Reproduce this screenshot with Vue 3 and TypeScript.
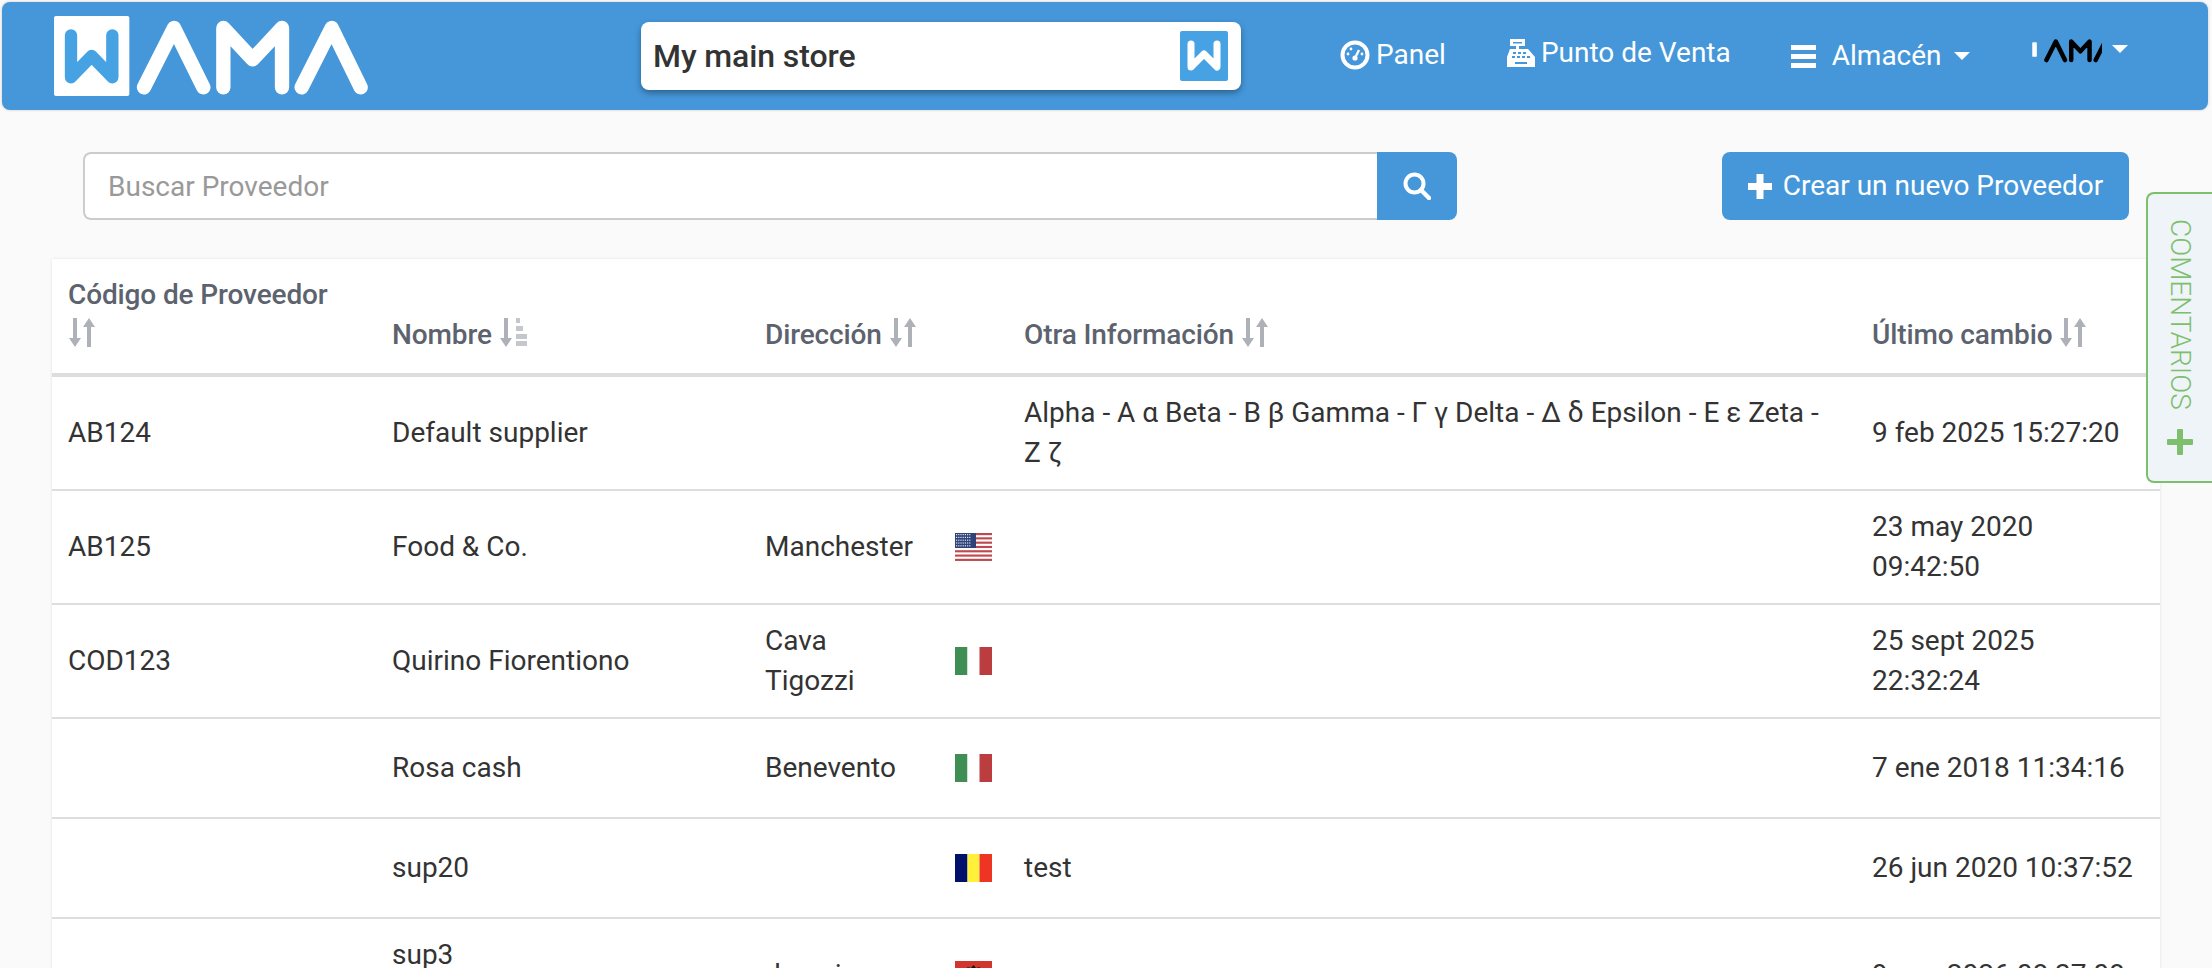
<script setup lang="ts">
interface Supplier {
  code: string
  name: string
  address: string
  flag: string
  info: string
  changed: string
}

const suppliers: Supplier[] = [
  {
    code: 'AB124',
    name: 'Default supplier',
    address: '',
    flag: '',
    info: 'Alpha - Α α Beta - Β β Gamma - Γ γ Delta - Δ δ Epsilon - Ε ε Zeta - Ζ ζ',
    changed: '9 feb 2025 15:27:20'
  },
  { code: 'AB125', name: 'Food & Co.', address: 'Manchester', flag: 'us', info: '', changed: '23 may 2020 09:42:50' },
  { code: 'COD123', name: 'Quirino Fiorentiono', address: 'Cava Tigozzi', flag: 'it', info: '', changed: '25 sept 2025 22:32:24' },
  { code: '', name: 'Rosa cash', address: 'Benevento', flag: 'it', info: '', changed: '7 ene 2018 11:34:16' },
  { code: '', name: 'sup20', address: '', flag: 'ro', info: 'test', changed: '26 jun 2020 10:37:52' },
  { code: '', name: 'sup3 Supermercadointernacional', address: 'duresi', flag: 'al', info: '', changed: '9 ene 2026 08:37:08' }
]

const headers = [
  { label: 'Código de Proveedor', cls: 'stacked', span: 1, active: false },
  { label: 'Nombre', cls: '', span: 1, active: true },
  { label: 'Dirección', cls: '', span: 2, active: false },
  { label: 'Otra Información', cls: '', span: 1, active: false },
  { label: 'Último cambio', cls: '', span: 1, active: false }
]

// shared outlines of the logo letters
const letters = 'M312 262L402 84L490 262M550 262V84L638 178L726 84V262M785 262L875 84L962 262'
const usStripes = [0, 2, 4, 6, 8, 10, 12]
const usStars = Array.from({ length: 35 }, (_, i) => ({ x: 1 + (i % 7) * 2.2, y: 1 + Math.floor(i / 7) * 2.8 }))
</script>

<template>
  <div class="page">
    <nav class="topbar">
      <svg class="logo" viewBox="42 48 942 240" aria-label="WAMA">
        <rect x="42" y="48" width="226" height="240" rx="6" fill="#fff" />
        <path d="M93 106V232L155 168L217 232V106" class="w-stroke" stroke="#46a2e3" />
        <path :d="letters" class="letters" stroke="#fff" />
      </svg>

      <div class="store">
        <span class="store-name">My main store</span>
        <svg class="store-logo" viewBox="0 0 48 50">
          <rect width="48" height="50" rx="2" fill="#46a2e3" />
          <path d="M11 13V36L24 23L37 36V13" class="w-stroke thin" stroke="#fff" />
        </svg>
      </div>

      <a class="nav-item panel">
        <svg class="nav-icon" width="30" height="30" viewBox="0 0 30 30">
          <circle cx="15" cy="15" r="12.5" fill="none" stroke="#fff" stroke-width="4" />
          <path d="M15 18L19 10" stroke="#fff" stroke-width="2.4" />
          <circle cx="15" cy="18" r="2.6" fill="#fff" />
          <circle cx="8" cy="14" r="1.4" fill="#fff" />
          <circle cx="11" cy="9" r="1.4" fill="#fff" />
          <circle cx="22" cy="14" r="1.4" fill="#fff" />
        </svg>
        Panel
      </a>
      <a class="nav-item punto">
        <svg class="nav-icon" width="28" height="28" viewBox="0 0 28 28">
          <path d="M3 0H18V7H12V10H21L28 18V28H0V18L3 10H9V7H3Z" fill="#fff" />
          <path d="M6 3H15V4.5H6Z" fill="#4597da" />
          <path d="M6 13H9V15H6ZM11 13H14V15H11ZM16 13H19V15H16ZM5 17H8V19H5ZM10 17H13V19H10ZM15 17H18V19H15ZM20 17H23V19H20ZM8 23H20V25H8Z" fill="#4597da" />
        </svg>
        Punto de Venta
      </a>
      <a class="nav-item almacen">
        <svg class="nav-icon bars" width="25" height="23" viewBox="0 0 25 23">
          <path d="M0 0H25V5H0ZM0 9H25V14H0ZM0 18H25V23H0Z" fill="#fff" />
        </svg>
        Almacén
        <span class="caret"></span>
      </a>
      <a class="nav-item user">
        <svg class="user-logo" width="70" height="25" viewBox="176 50 667 240">
          <rect x="176" y="90" width="44" height="140" rx="8" fill="#fff" />
          <path :d="letters" class="letters" stroke="#000" />
        </svg>
        <span class="caret"></span>
      </a>
    </nav>

    <div class="toolbar">
      <div class="search">
        <input class="search-input" type="text" placeholder="Buscar Proveedor" />
        <button type="button" class="search-btn" aria-label="Buscar">
          <svg width="28" height="28" viewBox="0 0 28 28">
            <circle cx="11.5" cy="11.5" r="9" fill="none" stroke="#fff" stroke-width="4" />
            <path d="M18 18L26 26" stroke="#fff" stroke-width="4.5" stroke-linecap="round" />
          </svg>
        </button>
      </div>
      <button type="button" class="new-btn">
        <svg width="24" height="25" viewBox="0 0 24 25">
          <path d="M8.5 0H15.5V9H24V16H15.5V25H8.5V16H0V9H8.5Z" fill="#fff" />
        </svg>
        Crear un nuevo Proveedor
      </button>
    </div>

    <table class="suppliers">
      <colgroup>
        <col class="c-code" />
        <col class="c-name" />
        <col class="c-addr" />
        <col class="c-flag" />
        <col class="c-info" />
        <col class="c-date" />
      </colgroup>
      <thead>
        <tr>
          <th v-for="h in headers" :key="h.label" :colspan="h.span" :class="h.cls">
            {{ h.label }}
            <svg class="sort" width="28" height="29" viewBox="0 0 28 29">
              <path d="M5 0H9V20H13L7 29L1 20H5Z" fill="#aeb2b8" />
              <path v-if="!h.active" d="M19 29H23V9H27L21 0L15 9H19Z" fill="#aeb2b8" />
              <path v-else d="M17 0H21V5H17ZM17 8H24V13H17ZM17 16H28V21H17ZM17 23H28V28H17Z" fill="#c4c7cc" />
            </svg>
          </th>
        </tr>
      </thead>
      <tbody>
        <tr v-for="s in suppliers" :key="s.name">
          <td>{{ s.code }}</td>
          <td>{{ s.name }}</td>
          <td><span class="address">{{ s.address }}</span></td>
          <td class="flag-cell">
            <svg v-if="s.flag === 'us'" class="flag" viewBox="0 0 37 28" preserveAspectRatio="none">
              <rect width="37" height="28" fill="#fff" />
              <rect v-for="n in usStripes" :key="n" x="0" :y="n * 2.15" width="37" height="2.15" fill="#bd4a4f" />
              <rect width="21" height="15" fill="#2f4379" />
              <rect v-for="(st, i) in usStars" :key="i" :x="st.x" :y="st.y" width="1.2" height="1.2" fill="#dfe4ee" />
            </svg>
            <svg v-else-if="s.flag === 'it'" class="flag" viewBox="0 0 37 28">
              <rect width="12.5" height="28" fill="#3f8f55" />
              <rect x="12.5" width="12" height="28" fill="#fff" />
              <rect x="24.5" width="12.5" height="28" fill="#bb3d40" />
            </svg>
            <svg v-else-if="s.flag === 'ro'" class="flag" viewBox="0 0 37 28">
              <rect width="12.5" height="28" fill="#00106b" />
              <rect x="12.5" width="12" height="28" fill="#fff13a" />
              <rect x="24.5" width="12.5" height="28" fill="#ee3524" />
            </svg>
            <svg v-else-if="s.flag === 'al'" class="flag" viewBox="0 0 37 28">
              <rect width="37" height="28" fill="#d0352e" />
              <path d="M18.5 4L21 7L25 6L23 10L25 13L21 14L22 20L18.5 24L15 20L16 14L12 13L14 10L12 6L16 7Z" fill="#1c1111" />
            </svg>
          </td>
          <td>{{ s.info }}</td>
          <td>{{ s.changed }}</td>
        </tr>
      </tbody>
    </table>

    <aside class="feedback">
      <span class="feedback-label">COMENTARIOS</span>
      <svg width="26" height="26" viewBox="0 0 26 26">
        <path d="M10 1A1 1 0 0 1 11 0H15A1 1 0 0 1 16 1V10H25A1 1 0 0 1 26 11V15A1 1 0 0 1 25 16H16V25A1 1 0 0 1 15 26H11A1 1 0 0 1 10 25V16H1A1 1 0 0 1 0 15V11A1 1 0 0 1 1 10H10Z" fill="#7dbf6c" />
      </svg>
    </aside>
  </div>
</template>

<style scoped>
.page {
  position: relative;
  height: 968px;
  overflow: hidden;
  font-family: Roboto, "Noto Sans", sans-serif;
  font-size: 28px;
  line-height: 40px;
  color: #333;
}

.topbar {
  display: flex;
  align-items: flex-start;
  height: 108px;
  margin: 2px 4px 0 2px;
  padding-left: 52px;
  background: #4597da;
  border-radius: 8px;
  box-shadow: 0 0 3px rgba(0, 0, 0, 0.2);
}

.logo {
  flex: none;
  width: 314px;
  height: 80px;
  margin-top: 14px;
}

.w-stroke,
.letters {
  fill: none;
  stroke-linecap: round;
  stroke-linejoin: round;
}

.w-stroke {
  stroke-width: 37;
}

.w-stroke.thin {
  stroke-width: 7;
}

.letters {
  stroke-width: 43;
}

.store {
  flex: none;
  display: flex;
  align-items: center;
  justify-content: space-between;
  width: 600px;
  height: 68px;
  margin: 20px 99px 0 273px;
  padding: 0 13px 0 12px;
  box-sizing: border-box;
  background: #fff;
  border-radius: 8px;
  box-shadow: 0 3px 6px rgba(0, 0, 0, 0.35);
}

.store-name {
  font-size: 32px;
  font-weight: 500;
  letter-spacing: -0.1px;
  color: #333;
}

.store-logo {
  width: 48px;
  height: 50px;
}

.nav-item {
  display: flex;
  align-items: center;
  flex: none;
  gap: 6px;
  margin-right: 62px;
  color: #fff;
  white-space: nowrap;
}

.panel {
  margin-top: 33px;
  margin-right: 61px;
}

.punto {
  margin-top: 31px;
  margin-right: 60px;
}

.almacen {
  margin-top: 34px;
}

.bars {
  margin-right: 10px;
}

.user {
  margin: 36px 0 0 0;
  gap: 10px;
}

.caret {
  width: 0;
  height: 0;
  margin-left: 6px;
  border-top: 8px solid #fff;
  border-left: 8px solid transparent;
  border-right: 8px solid transparent;
}

.user .caret {
  margin: -4px 0 0 0;
}

.toolbar {
  display: flex;
  justify-content: space-between;
  margin: 42px 83px 0;
}

.search {
  display: flex;
  width: 1374px;
  height: 68px;
}

.search-input {
  flex: 1;
  min-width: 0;
  padding: 2px 23px 0;
  box-sizing: border-box;
  font: inherit;
  color: #333;
  background: #fff;
  border: 2px solid #ccc;
  border-right: 0;
  border-radius: 8px 0 0 8px;
  outline: none;
}

.search-input::placeholder {
  color: #999;
}

.search-btn {
  display: flex;
  align-items: center;
  justify-content: center;
  width: 80px;
  padding: 0;
  background: #4597da;
  border: 0;
  border-radius: 0 8px 8px 0;
}

.new-btn {
  display: flex;
  align-items: center;
  justify-content: center;
  gap: 11px;
  width: 407px;
  height: 68px;
  padding: 0;
  font: inherit;
  color: #fff;
  background: #4597da;
  border: 0;
  border-radius: 8px;
}

.suppliers {
  width: 2108px;
  margin: 39px 0 0 52px;
  table-layout: fixed;
  border-collapse: separate;
  border-spacing: 0;
  background: #fff;
  box-shadow: 0 0 3px rgba(0, 0, 0, 0.1);
}

.c-code { width: 324px; }
.c-name { width: 373px; }
.c-addr { width: 190px; }
.c-flag { width: 69px; }
.c-info { width: 848px; }
.c-date { width: 304px; }

th {
  padding: 16px 16px 18px;
  font-weight: 500;
  letter-spacing: -0.12px;
  text-align: left;
  vertical-align: bottom;
  color: #5c636e;
  border-bottom: 4px solid #ddd;
}

th.stacked .sort {
  display: block;
  margin: 3px 0 8px;
}

.sort {
  vertical-align: -3px;
}

td {
  box-sizing: border-box;
  height: 100px;
  padding: 16px;
  border-bottom: 2px solid #ddd;
  vertical-align: middle;
}

.address {
  display: block;
  width: 150px;
}

.flag-cell {
  font-size: 0;
  line-height: 0;
}

.flag {
  display: block;
  width: 37px;
  height: 28px;
}

.feedback {
  position: absolute;
  top: 192px;
  right: 0;
  display: flex;
  flex-direction: column;
  align-items: center;
  box-sizing: border-box;
  width: 66px;
  height: 291px;
  padding-top: 25px;
  gap: 19px;
  background: #eff4f9;
  border: 2px solid #7dbf6c;
  border-right: 0;
  border-radius: 8px 0 0 8px;
}

.feedback-label {
  writing-mode: vertical-rl;
  font-size: 28px;
  font-weight: 300;
  line-height: 30px;
  color: #7dbf6c;
}
</style>

<style>
html,
body {
  margin: 0;
  height: 968px;
  overflow: hidden;
  background: #fafafa;
}
</style>
